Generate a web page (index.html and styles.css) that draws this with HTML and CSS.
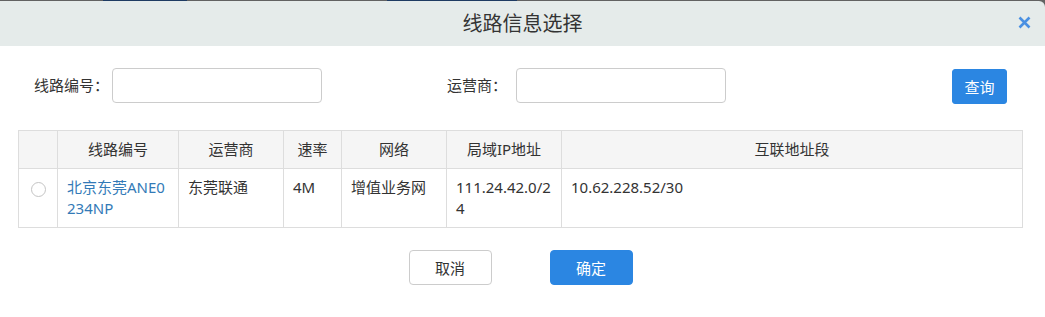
FILE: index.html
```html
<!DOCTYPE html>
<html lang="zh-CN">
<head>
  <meta charset="UTF-8">
  <title>线路信息选择</title>
  <link rel="stylesheet" href="styles.css">
</head>
<body>

<div class="backdrop">
  <span class="seg seg-a"></span>
  <span class="seg seg-b"></span>
</div>

<div class="modal">
  <div class="modal-header">
    <h3>线路信息选择</h3>
    <a href="javascript:void(0);" class="close">
      <svg width="13" height="13" viewBox="0 0 13 13">
        <path d="M1.5 1.5 L11.5 11.5 M11.5 1.5 L1.5 11.5" stroke="#4a90e2" stroke-width="2.6" fill="none"/>
      </svg>
    </a>
  </div>

  <div class="modal-body">
    <!-- 查询条件 -->
    <div class="search">
      <label class="label-code">线路编号：</label>
      <input type="text" class="ipt">
      <label class="label-op">运营商：</label>
      <input type="text" class="ipt">
      <button class="btn btn-blue btn-query">查询</button>
    </div>

    <!-- 线路列表 -->
    <table class="grid">
      <colgroup>
        <col style="width:39px">
        <col style="width:121px">
        <col style="width:105px">
        <col style="width:58px">
        <col style="width:105px">
        <col style="width:115px">
        <col>
      </colgroup>
      <thead>
        <tr>
          <th></th>
          <th>线路编号</th>
          <th>运营商</th>
          <th>速率</th>
          <th>网络</th>
          <th>局域IP地址</th>
          <th>互联地址段</th>
        </tr>
      </thead>
      <tbody>
        <tr>
          <td class="chk"><span class="radio"></span></td>
          <td><a href="#">北京东莞ANE0234NP</a></td>
          <td>东莞联通</td>
          <td>4M</td>
          <td>增值业务网</td>
          <td>111.24.42.0/24</td>
          <td>10.62.228.52/30</td>
        </tr>
      </tbody>
    </table>

    <div class="footer">
      <button class="btn btn-white">取消</button>
      <button class="btn btn-blue">确定</button>
    </div>
  </div>
</div>

</body>
</html>
```

FILE: styles.css
```css
* {
  margin: 0;
  padding: 0;
  box-sizing: border-box;
}

body {
  font-family: "Noto Sans", "Noto Sans CJK SC", sans-serif;
  font-size: 15px;
  color: #333;
  background-color: #fff;
}

.backdrop {
  height: 1px;
  background-color: #626262;
  display: flex;
}

.seg {
  display: block;
  height: 1px;
  background-color: #1e3b62;
}

.seg-a {
  width: 84px;
  margin-left: 103px;
}

.seg-b {
  width: 130px;
  margin-left: 200px;
}

.modal {
  background-color: #626262;
}

.modal-header {
  height: 45px;
  background-color: #e5ebea;
  border-top-right-radius: 6px;
  display: flex;
  align-items: center;
  justify-content: center;
  position: relative;
}

.modal-header h3 {
  font-size: 20px;
  font-weight: normal;
  color: #333;
  line-height: 24px;
}

.close {
  position: absolute;
  right: 14px;
  top: 15px;
  display: block;
  width: 13px;
  height: 13px;
}

.close svg {
  display: block;
}

.modal-body {
  background-color: #fff;
  padding: 20px 22px 32px 18px;
}

.search {
  display: flex;
  align-items: center;
  padding-left: 16px;
}

.search label {
  line-height: 20px;
}

.label-code {
  width: 78px;
}

.label-op {
  margin-left: 125px;
  width: 69px;
}

.ipt {
  width: 210px;
  height: 35px;
  border: 1px solid #ccc;
  border-radius: 4px;
  outline: none;
  padding: 0 8px;
  font-family: inherit;
  font-size: 15px;
}

.btn {
  width: 83px;
  height: 35px;
  border-radius: 4px;
  font-family: inherit;
  font-size: 15px;
  cursor: pointer;
}

.btn-blue {
  background-color: #2b86e2;
  border: 1px solid #2b86e2;
  color: #fff;
}

.btn-white {
  background-color: #fff;
  border: 1px solid #ccc;
  color: #333;
}

.btn-query {
  width: 55px;
  margin-left: auto;
  margin-right: 16px;
  margin-top: 3px;
  border-radius: 3px;
}

.grid {
  width: 1005px;
  margin-top: 26px;
  border-collapse: collapse;
  table-layout: fixed;
}

.grid th,
.grid td {
  border: 1px solid #ddd;
  padding: 8px 9px 8px 9px;
  line-height: 21px;
  vertical-align: top;
  word-break: break-all;
}

.grid th {
  background-color: #f5f5f5;
  font-weight: normal;
  text-align: center;
}

.grid td a {
  color: #337ab7;
  text-decoration: none;
}

.grid td.chk {
  padding: 13px 0 0 12px;
}

.radio {
  display: block;
  width: 15px;
  height: 15px;
  border: 1px solid #c4c4c4;
  border-radius: 50%;
  background-color: #fff;
}

.footer {
  display: flex;
  justify-content: center;
  gap: 58px;
  margin-top: 22px;
}
```
